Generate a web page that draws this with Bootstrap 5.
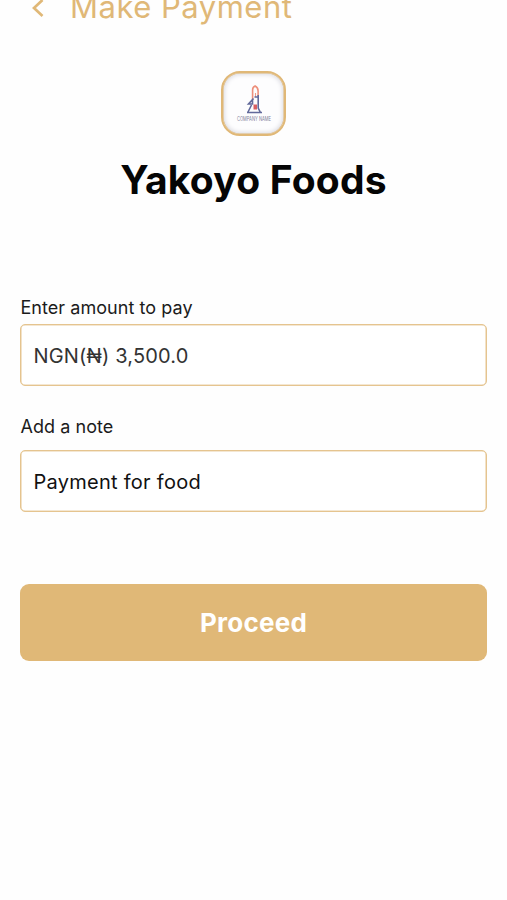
<!DOCTYPE html>
<html lang="en">
<head>
<meta charset="utf-8">
<meta name="viewport" content="width=device-width, initial-scale=1">
<title>Make Payment</title>
<link href="https://cdn.jsdelivr.net/npm/bootstrap@5.3.0/dist/css/bootstrap.min.css" rel="stylesheet">
<style>
:root { --gold: #e0b877; }
body { font-family: Inter, "Liberation Sans", sans-serif; background: #fefefe; color: #050505; height: 900px; overflow: hidden; }
.screen { padding: 0 20px; }
.topbar { height: 54px; margin-top: -20px; color: var(--gold); }
.back-btn { width: 39px; margin-left: 11px; color: var(--gold); }
.back-icon { margin-top: 1px; }
.topbar h1 { font-size: 31px; font-weight: 400; letter-spacing: .5px; line-height: 54px; }
.merchant-logo { width: 65px; height: 65px; margin-top: 37px; border: 2px solid var(--gold); border-radius: 19px; background: #fdfdfe; box-shadow: inset 0 0 0 .5px var(--gold), inset 0 0 5px 1px #d2d2da; }
.merchant-name { font-size: 39px; font-weight: 700; line-height: 48px; margin-top: 20px; letter-spacing: .2px; }
.pay-label { font-size: 18px; line-height: 22px; letter-spacing: .05px; color: #1b1b1b; display: block; padding-left: .5px; }
.pay-input, .pay-input:focus { height: 62px; border: 1px solid #e5c48f; border-radius: 5px; padding: 2px 12.5px 0; font-size: 20px; letter-spacing: .27px; color: #111; background: #fff; box-shadow: inset 0 0 0 .6px #e9cfa5; }
.amount-input, .amount-input:focus { color: #333; letter-spacing: .15px; }
.amount-group { margin-top: 93px; }
.amount-group .pay-label { margin-bottom: 5px; }
.note-group { margin-top: 30px; }
.note-group .pay-label { margin-bottom: 12px; }
.pay-btn { height: 77px; border-radius: 9px; background: var(--gold); color: #fff; font-size: 26px; font-weight: 700; letter-spacing: .25px; margin-top: 72px; }
</style>
</head>
<body>
<main class="screen">
  <header class="topbar d-flex align-items-center">
    <button class="back-btn btn p-0 border-0 d-flex" type="button" aria-label="Back">
      <svg class="back-icon" width="14" height="20" viewBox="0 0 14 20" fill="none" stroke="currentColor" stroke-width="2.7"><path d="M11.500 2 3 10l8.500 8"/></svg>
    </button>
    <h1 class="m-0">Make Payment</h1>
  </header>
  <section class="d-flex flex-column align-items-center">
    <div class="merchant-logo d-flex justify-content-center">
      <svg width="60" height="60" viewBox="0 0 60 60" fill="none">
        <path d="M28.600 27V17q0-3 2.500-4 3 1.500 3 5v5" stroke="#ed8f7b" stroke-width="1.600"/>
        <path d="M31.500 20v4" stroke="#ed9a88" stroke-width="1.100"/>
        <path d="M34.200 22v13l2 4M30.500 24h3M29.500 25.500l-5 5.500h4v-4M27.500 32l-3.500 7M23 39.500h15" stroke="#626a9b" stroke-width="1.600"/>
        <path d="M29.500 31.500h3.500v5h-3.500z" fill="#d95f62"/>
        <text x="30" y="47.600" text-anchor="middle" textLength="34" lengthAdjust="spacingAndGlyphs" font-family="Inter, sans-serif" font-size="5.500" fill="#7d8099">COMPANY NAME</text>
      </svg>
    </div>
    <h2 class="merchant-name mb-0">Yakoyo Foods</h2>
  </section>
  <form>
    <div class="amount-group">
      <label class="pay-label" for="amount">Enter amount to pay</label>
      <input id="amount" class="pay-input amount-input form-control" type="text" value="NGN(₦) 3,500.0">
    </div>
    <div class="note-group">
      <label class="pay-label" for="note">Add a note</label>
      <input id="note" class="pay-input form-control" type="text" value="Payment for food">
    </div>
    <button class="pay-btn btn w-100" type="button">Proceed</button>
  </form>
</main>
<script src="https://cdn.jsdelivr.net/npm/bootstrap@5.3.0/dist/js/bootstrap.bundle.min.js"></script>
</body>
</html>
